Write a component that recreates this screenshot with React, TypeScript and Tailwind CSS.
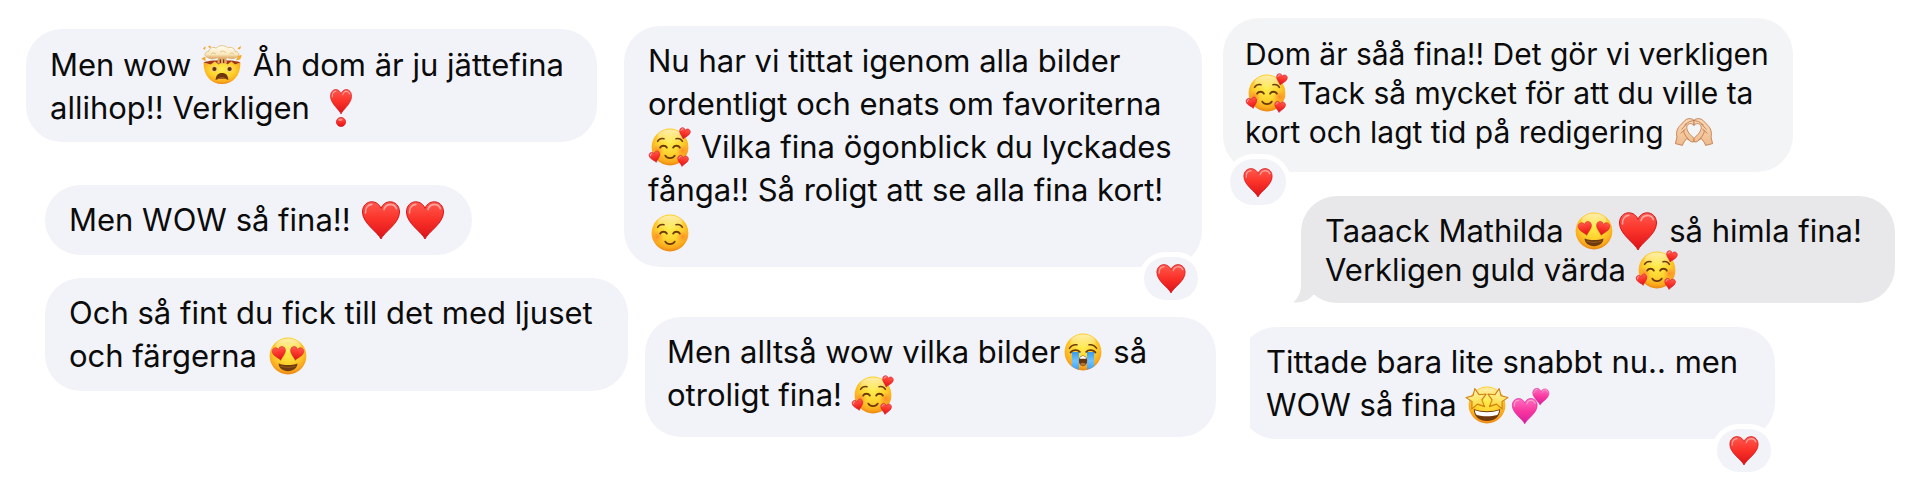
import type { ReactNode } from "react";

const glyph = "-mt-3 inline-block h-[38px] w-[44px] overflow-visible align-[-8px]";

const HEART = "M22 38C19 31 3.5 22.5 3.5 11C3.5 4.5 8 .8 12.8 .8C17.2 .8 20.6 3.6 22 7.4C23.4 3.6 26.8 .8 31.2 .8C36 .8 40.5 4.5 40.5 11C40.5 22.5 25 31 22 38Z";

function Glyph({ label, children }: { label: string; children: ReactNode }) {
  return (
    <svg role="img" aria-label={label} viewBox="0 0 44 38" className={glyph}>
      {children}
    </svg>
  );
}

function Gradients() {
  return (
    <svg aria-hidden="true" className="absolute h-0 w-0">
      <defs>
        <radialGradient id="face" cx="0.5" cy="0.36" r="0.66">
          <stop offset="0" stopColor="#ffee4e" />
          <stop offset="0.5" stopColor="#fed430" />
          <stop offset="0.82" stopColor="#fbaa1c" />
          <stop offset="1" stopColor="#e97e0e" />
        </radialGradient>
        <linearGradient id="shine" x1="0" y1="0" x2="0" y2="1">
          <stop offset="0" stopColor="#fff" stopOpacity="0.6" />
          <stop offset="1" stopColor="#fff" stopOpacity="0" />
        </linearGradient>
        <linearGradient id="heart" x1="0" y1="0" x2="0" y2="1">
          <stop offset="0" stopColor="#ff5a50" />
          <stop offset="0.45" stopColor="#fb342b" />
          <stop offset="1" stopColor="#dc1218" />
        </linearGradient>
        <linearGradient id="pink" x1="0" y1="0" x2="0" y2="1">
          <stop offset="0" stopColor="#ff6fc4" />
          <stop offset="0.5" stopColor="#f9369f" />
          <stop offset="1" stopColor="#d81ba0" />
        </linearGradient>
        <radialGradient id="cheek">
          <stop offset="0" stopColor="#ff6a2b" stopOpacity="0.6" />
          <stop offset="1" stopColor="#ff8a2b" stopOpacity="0" />
        </radialGradient>
        <linearGradient id="tears" x1="0" y1="0" x2="0" y2="1">
          <stop offset="0" stopColor="#3a9bea" />
          <stop offset="0.5" stopColor="#6fc4ff" />
          <stop offset="1" stopColor="#3f9ff0" />
        </linearGradient>
        <linearGradient id="cloud" x1="0" y1="0" x2="0" y2="1">
          <stop offset="0" stopColor="#fffdf2" />
          <stop offset="0.65" stopColor="#fae8bd" />
          <stop offset="1" stopColor="#d99a55" />
        </linearGradient>
        <linearGradient id="star" x1="0" y1="0" x2="0" y2="1">
          <stop offset="0" stopColor="#fff9b8" />
          <stop offset="1" stopColor="#ffd62e" />
        </linearGradient>
        <linearGradient id="skin" x1="0" y1="0" x2="0" y2="1">
          <stop offset="0" stopColor="#fbd9b8" />
          <stop offset="1" stopColor="#eebb8c" />
        </linearGradient>
      </defs>
    </svg>
  );
}

function HeartShape({ fill = "url(#heart)", edge = "#d3161b" }: { fill?: string; edge?: string }) {
  return (
    <>
      <path d={HEART} fill={fill} stroke={edge} strokeWidth="1" />
      <path d="M6.5 12C6.2 6.8 9 3.8 12.8 3.4M25 8.6C26 5.4 28.4 3.6 31.4 3.4C34.4 3.6 36.4 5 37.4 7.6" fill="none" stroke="#ffc3bd" strokeOpacity="0.75" strokeWidth="1.6" strokeLinecap="round" />
    </>
  );
}

function MiniHeart({ x, y, turn }: { x: number; y: number; turn: number }) {
  return (
    <g transform={`translate(${x} ${y}) rotate(${turn}) scale(0.29)`}>
      <path d={HEART} transform="translate(-22 -19)" fill="url(#heart)" stroke="#d51d2c" strokeWidth="2" />
      <path d="M-14 -8C-13.5 -12 -11.5 -14 -8.5 -14.5" fill="none" stroke="#ffb5b0" strokeWidth="3" strokeLinecap="round" />
    </g>
  );
}

function FaceBase() {
  return (
    <>
      <circle cx="22" cy="19" r="18.4" fill="url(#face)" />
      <ellipse cx="22" cy="8.6" rx="12.5" ry="7" fill="url(#shine)" />
    </>
  );
}

function SmileFeatures() {
  return (
    <>
      <circle cx="9.5" cy="22.5" r="6.5" fill="url(#cheek)" />
      <circle cx="34.5" cy="22.5" r="6.5" fill="url(#cheek)" />
      <g fill="none" stroke="#6b3a0c" strokeLinecap="round">
        <path d="M9.6 13.4C11 11.2 13.2 10.2 16 10.8M28 10.8C30.8 10.2 33 11.2 34.4 13.4" strokeWidth="1.5" />
        <path d="M12.2 19.6C13.6 17.2 17.4 17.2 18.8 19.6M25.2 19.6C26.6 17.2 30.4 17.2 31.8 19.6" strokeWidth="1.9" />
        <path d="M17.3 27.6C19.2 31 24.8 31 26.7 27.6" strokeWidth="1.8" />
      </g>
    </>
  );
}

function Heart() {
  return (
    <Glyph label="rött hjärta">
      <HeartShape />
    </Glyph>
  );
}

function Smile() {
  return (
    <Glyph label="leende ansikte">
      <FaceBase />
      <SmileFeatures />
    </Glyph>
  );
}

function Loving() {
  return (
    <Glyph label="leende ansikte med hjärtan">
      <FaceBase />
      <SmileFeatures />
      <MiniHeart x={36.4} y={5.6} turn={14} />
      <MiniHeart x={7} y={29} turn={-14} />
      <MiniHeart x={34.8} y={33} turn={8} />
    </Glyph>
  );
}

function HeartEyes() {
  return (
    <Glyph label="ansikte med hjärtögon">
      <FaceBase />
      <g transform="translate(13.4 16.6) rotate(-12) scale(0.36)">
        <path d={HEART} transform="translate(-22 -19)" fill="url(#heart)" stroke="#d62a1d" strokeWidth="1.5" />
      </g>
      <g transform="translate(30.6 16.6) rotate(12) scale(0.36)">
        <path d={HEART} transform="translate(-22 -19)" fill="url(#heart)" stroke="#d62a1d" strokeWidth="1.5" />
      </g>
      <path d="M12.6 26.6C18 28.6 26 28.6 31.4 26.6C31.6 31 27.4 34.2 22 34.2C16.6 34.2 12.4 31 12.6 26.6Z" fill="#6d3b0f" />
      <path d="M14.4 29.1C19 30.7 25 30.7 29.6 29.1" fill="none" stroke="#9c5a17" strokeWidth="1" />
    </Glyph>
  );
}

function Crying() {
  return (
    <Glyph label="storgråtande ansikte">
      <FaceBase />
      <path d="M10.8 19H18V36.8Q13.6 35.8 10.8 33.2ZM26 19H33.2V33.2Q30.4 35.8 26 36.8Z" fill="url(#tears)" />
      <g fill="none" stroke="#6b3a0c" strokeLinecap="round">
        <path d="M8.4 15.4C10.2 12.6 13 11.4 16 11.8M28 11.8C31 11.4 33.8 12.6 35.6 15.4" strokeWidth="1.4" />
        <path d="M9.6 19.4C11.6 16.6 16.4 16.4 18.8 18.8M34.4 19.4C32.4 16.6 27.6 16.4 25.2 18.8" strokeWidth="1.9" />
      </g>
      <ellipse cx="22" cy="27.8" rx="4.2" ry="5.4" fill="#68360d" />
      <path d="M18.7 25.7C19.4 22 24.6 22 25.3 25.7Z" fill="#fff" />
      <ellipse cx="22" cy="31.2" rx="2.8" ry="1.5" fill="#b7743a" />
    </Glyph>
  );
}

function MindBlown() {
  return (
    <Glyph label="exploderande huvud">
      <path d="M3.6 16.5C3.2 30 11.4 38 22 38S40.8 30 40.4 16.5L35 18.6L31.4 15.6L27.6 18.4L23.4 15.4L18.6 18.4L14.8 15.4L10.8 18.4Z" fill="url(#face)" />
      <path d="M3.6 16.5L10.8 18.4L14.8 15.4L18.6 18.4L23.4 15.4L27.6 18.4L31.4 15.6L35 18.6L40.4 16.5C36 13.4 8 13.4 3.6 16.5Z" fill="#a5380c" />
      <path d="M18 10L17.4 17.4H27L26 10Z" fill="#e5a560" />
      <path d="M20.4 11V17M23.6 11V17" stroke="#7f3411" strokeWidth="1.2" />
      <path d="M7.4 11.4C3.4 9.8 4.8 5.2 8.8 5.6C9 1.6 13.8 .4 16.2 2.2C18.4 -1.2 25.4 -1 27.4 1.8C31 .4 35.2 2.2 35 5.6C39.2 5.2 40.4 9.8 36.4 11.4C33.8 13.4 29.4 12.8 27.4 11.8C24.8 13.6 19.6 13.4 17.2 11.8C14.4 13.4 9.8 13.2 7.4 11.4Z" fill="url(#cloud)" stroke="#dcb877" strokeWidth="0.8" />
      <path d="M11 8C12.6 6.2 15 6.6 16 8.2M20 6.2C22 4.4 25 5 25.8 7M29.4 8.4C30.6 6.6 33 6.6 34 8" fill="none" stroke="#dfbd82" strokeWidth="0.9" />
      <path d="M3.4 2.4L5.2 .8L4.8 3.4ZM1.8 12.8L5 11L5.2 14.6ZM36.6 14L38.2 10.2L41.4 9.4L40 13ZM37.8 2.6L40.6 .6L39.8 3ZM8.6 .2L10.8 .4L9.8 2Z" fill="#f8ad25" stroke="#f09a18" strokeWidth="0.6" />
      <circle cx="14.4" cy="23" r="3.2" fill="#f5cf77" />
      <circle cx="29.6" cy="23" r="3.2" fill="#f5cf77" />
      <circle cx="14.4" cy="23" r="2.1" fill="#663008" />
      <circle cx="29.6" cy="23" r="2.1" fill="#663008" />
      <path d="M15.6 34C16 28.2 19 27 22 27S28 28.2 28.4 34C26 32.4 18 32.4 15.6 34Z" fill="#6d360c" />
      <path d="M17 33.2C20 30.6 24 30.6 27 33.2C24 32.2 20 32.2 17 33.2Z" fill="#b05f22" />
    </Glyph>
  );
}

function HeartExclamation() {
  return (
    <Glyph label="hjärtformat utropstecken">
      <g transform="translate(9.5 0) scale(0.57 0.66)">
        <HeartShape />
      </g>
      <circle cx="22" cy="33" r="4.6" fill="url(#heart)" stroke="#d3161b" strokeWidth="0.7" />
      <ellipse cx="21.4" cy="30.8" rx="2.2" ry="1.1" fill="#ffb0aa" fillOpacity="0.7" />
    </Glyph>
  );
}

function StarStruck() {
  const star = "M0 -9.4L2.8 -3.2L9.4 -2.6L4.6 2L6 8.6L0 5.2L-6 8.6L-4.6 2L-9.4 -2.6L-2.8 -3.2Z";
  return (
    <Glyph label="ansikte med stjärnögon">
      <FaceBase />
      <path d="M8.8 23C16 26 28 26 35.2 23C35.2 30.8 29.4 35 22 35S8.8 30.8 8.8 23Z" fill="#70380c" />
      <path d="M9.8 24.2C17 26.8 27 26.8 34.2 24.2C34 26.4 33.2 28 32.2 29C26 30.8 18 30.8 11.8 29C10.8 28 10 26.4 9.8 24.2Z" fill="#fff" />
      <g fill="url(#star)" stroke="#cf7d14" strokeWidth="1" strokeLinejoin="round">
        <path d={star} transform="translate(11.6 12.6) rotate(-10) scale(1.08)" />
        <path d={star} transform="translate(32.4 12.6) rotate(10) scale(1.08)" />
      </g>
    </Glyph>
  );
}

function TwoHearts() {
  return (
    <Glyph label="två hjärtan">
      <g transform="translate(1 12) scale(0.67 0.68)">
        <HeartShape fill="url(#pink)" edge="#d9209a" />
      </g>
      <g transform="translate(22.5 1.6) rotate(4) scale(0.44)">
        <HeartShape fill="url(#pink)" edge="#d9209a" />
      </g>
    </Glyph>
  );
}

function HeartHands() {
  const hand = "M3.4 30.6L5 24C3.8 19 5.4 15.2 8.2 12.4L13.2 7.2C15.2 5.4 18.4 5.2 20.8 6.4L22 7.4V12.4C19.8 10 16.8 10 15.4 12.2C13.8 15 15.4 18.4 18 21.4L22 25.4V28.6C20.4 29.4 18.8 28.8 17.4 27.4L14.6 25.4C13.6 27.6 11.6 28.6 10.4 32.4Z";
  const lines = "M22 7.4L17.4 8.6L12.4 12M9.6 16.4L14.6 11M8.6 20.4L13.6 16M17.4 27.4L15.2 24.8C13 22.4 11.4 19.4 11.8 17";
  return (
    <Glyph label="händer som formar ett hjärta">
      <g stroke="#bf7c4e" strokeWidth="0.9" strokeLinejoin="round">
        <path d={hand} fill="url(#skin)" />
        <path d={lines} fill="none" />
        <g transform="translate(44 0) scale(-1 1)">
          <path d={hand} fill="url(#skin)" />
          <path d={lines} fill="none" />
        </g>
      </g>
    </Glyph>
  );
}

function Reaction({ className }: { className: string }) {
  return (
    <span className={`absolute flex items-center justify-center rounded-full bg-[#f2f3f8] ring-[5px] ring-white ${className}`}>
      <svg role="img" aria-label="reaktion: hjärta" viewBox="3 0 38 38" className="h-[29px] w-[30px]">
        <HeartShape />
      </svg>
    </span>
  );
}

function Bubble({ className, children }: { className: string; children: ReactNode }) {
  return <article className={`relative rounded-[36px] whitespace-nowrap ${className}`}>{children}</article>;
}

export default function App() {
  return (
    <main className="grid min-h-screen grid-cols-[minmax(0,598fr)_minmax(0,599fr)_minmax(0,672fr)] bg-white pr-[25px] pl-[26px] font-['Inter',sans-serif] text-[31px] leading-[43px] text-[#0b0b0c]">
      <Gradients />

      <section className="flex flex-col items-start pt-[29px]">
        <Bubble className="w-[571px] bg-[#f2f3f8] px-6 pt-[14px] pb-[13px]">
          <p>
            Men wow <MindBlown /> Åh dom är ju jättefina
            <br />
            allihop!! Verkligen <HeartExclamation />
          </p>
        </Bubble>
        <Bubble className="mt-[43px] ml-[19px] w-[427px] bg-[#f2f3f8] px-6 pt-[13px] pb-[14px]">
          <p>
            Men WOW så fina!! <Heart />
            <Heart />
          </p>
        </Bubble>
        <Bubble className="mt-[23px] ml-[19px] w-[583px] bg-[#f2f3f8] px-6 pt-[13px] pb-[14px]">
          <p>
            Och så fint du fick till det med ljuset
            <br />
            och färgerna <HeartEyes />
          </p>
        </Bubble>
      </section>

      <section className="flex flex-col items-start pt-[26px]">
        <Bubble className="w-[578px] bg-[#f2f3f8] px-6 pt-[13px] pb-[13px]">
          <p>
            Nu har vi tittat igenom alla bilder
            <br />
            ordentligt och enats om favoriterna
            <br />
            <Loving /> Vilka fina ögonblick du lyckades
            <br />
            fånga!! Så roligt att se alla fina kort!
            <br />
            <Smile />
          </p>
          <Reaction className="right-1 -bottom-[33px] h-[43px] w-[54px]" />
        </Bubble>
        <Bubble className="mt-[50px] ml-[21px] w-[571px] bg-[#f2f3f8] px-[22px] pt-[13px] pb-[21px]">
          <p>
            Men alltså wow vilka bilder
            <Crying /> så
            <br />
            otroligt fina! <Loving />
          </p>
        </Bubble>
      </section>

      <section className="flex flex-col items-start pt-[18px]">
        <Bubble className="w-[570px] bg-[#f3f4f6] px-[22px] pt-[17px] pb-5 text-[30px] leading-[39px]">
          <p>
            Dom är såå fina!! Det gör vi verkligen
            <br />
            <Loving /> Tack så mycket för att du ville ta
            <br />
            kort och lagt tid på redigering <HeartHands />
          </p>
          <Reaction className="-bottom-[33px] left-[7px] h-[46px] w-[56px]" />
        </Bubble>
        <Bubble className="mt-6 w-[594px] self-end bg-[#e8e8ea] px-6 pt-[15px] pb-[14px] leading-[39px]">
          <svg aria-hidden="true" viewBox="0 0 30 34" className="absolute bottom-0 -left-2 h-[34px] w-[30px]">
            <path d="M8 0V15C8 23 5.5 29 .3 33.2C8 34.4 15.5 31.5 20 26L30 20V0Z" fill="#e8e8ea" />
          </svg>
          <p className="relative">
            Taaack Mathilda <HeartEyes />
            <Heart /> så himla fina!
            <br />
            Verkligen guld värda <Loving />
          </p>
        </Bubble>
        <div className="relative mt-6 ml-[27px] w-[525px]">
          <div className="overflow-hidden">
            <Bubble className="-ml-[10px] bg-[#f2f3f8] pt-[13px] pr-6 pb-[13px] pl-[26px]">
              <p>
                Tittade bara lite snabbt nu.. men
                <br />
                WOW så fina <StarStruck />
                <TwoHearts />
              </p>
            </Bubble>
          </div>
          <Reaction className="right-1 -bottom-[33px] h-[43px] w-[54px]" />
        </div>
      </section>
    </main>
  );
}
